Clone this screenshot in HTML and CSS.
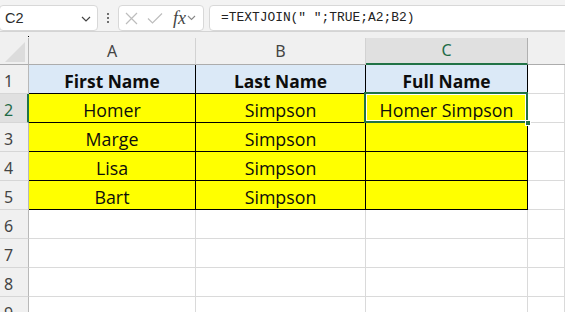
FILE: index.html
```html
<!DOCTYPE html>
<html>
<head>
<meta charset="utf-8">
<link rel="stylesheet" href="styles.css">
</head>
<body>
<div class="app">
  <div class="toolbar">
    <div class="namebox">
      <span class="nb-text">C2</span>
      <svg class="chev" width="10" height="6" viewBox="0 0 10 6"><path d="M1 1l4 4 4-4" fill="none" stroke="#444" stroke-width="1.2"/></svg>
    </div>
    <div class="dots"><span></span><span></span><span></span></div>
    <div class="fnbox">
      <svg class="ic" width="13" height="13" viewBox="0 0 13 13"><path d="M1 1l11 11M12 1L1 12" stroke="#bdbdbd" stroke-width="1.2" fill="none"/></svg>
      <svg class="ic" width="16" height="13" viewBox="0 0 16 13"><path d="M1 6.5l4.5 4.5L15 1.5" stroke="#bdbdbd" stroke-width="1.2" fill="none"/></svg>
      <span class="fx">fx</span>
      <svg class="chev2" width="9" height="6" viewBox="0 0 9 6"><path d="M1 1l3.5 3.5L8 1" fill="none" stroke="#888" stroke-width="1.1"/></svg>
    </div>
    <div class="formula">=TEXTJOIN(" ";TRUE;A2;B2)</div>
  </div>
  <div class="gap"><span class="dot"></span></div>
  <div class="grid">
    <div class="corner"><span class="tri"></span></div>
    <div class="ch">A</div>
    <div class="ch">B</div>
    <div class="ch sel">C</div>
    <div class="ch last"></div>

    <div class="rh">1</div>
    <div class="c hd tb">First Name</div>
    <div class="c hd tb">Last Name</div>
    <div class="c hd tb">Full Name</div>
    <div class="c e"></div>

    <div class="rh rsel">2</div>
    <div class="c y tb">Homer</div>
    <div class="c y tb">Simpson</div>
    <div class="c y tb active">Homer Simpson<span class="handle"></span></div>
    <div class="c e"></div>

    <div class="rh">3</div>
    <div class="c y tb">Marge</div>
    <div class="c y tb">Simpson</div>
    <div class="c y tb"></div>
    <div class="c e"></div>

    <div class="rh">4</div>
    <div class="c y tb">Lisa</div>
    <div class="c y tb">Simpson</div>
    <div class="c y tb"></div>
    <div class="c e"></div>

    <div class="rh">5</div>
    <div class="c y tb">Bart</div>
    <div class="c y tb">Simpson</div>
    <div class="c y tb"></div>
    <div class="c e"></div>

    <div class="rh">6</div>
    <div class="c e"></div><div class="c e"></div><div class="c e"></div><div class="c e"></div>
    <div class="rh">7</div>
    <div class="c e"></div><div class="c e"></div><div class="c e"></div><div class="c e"></div>
    <div class="rh">8</div>
    <div class="c e"></div><div class="c e"></div><div class="c e"></div><div class="c e"></div>
    <div class="rh">9</div>
    <div class="c e"></div><div class="c e"></div><div class="c e"></div><div class="c e"></div>
  </div>
</div>
</body>
</html>
```
FILE: styles.css
```css
* { box-sizing: border-box; }
html, body { margin: 0; padding: 0; }
body { width: 565px; height: 312px; overflow: hidden; background: #f0f0f0; font-family: "Open Sans", "Noto Sans", sans-serif; }
.app { width: 565px; }

.toolbar {
  height: 32px;
  display: flex;
  align-items: flex-start;
  padding-top: 5px;
  background: #f3f3f3;
  border-bottom: 1px solid #d4d4d4;
}
.namebox {
  width: 99px; height: 26px;
  margin-left: -1px;
  background: #fff;
  border: 1px solid #d8d8d8;
  border-radius: 4px;
  display: flex; align-items: center; justify-content: space-between;
  padding: 0 6px 0 5px;
}
.nb-text { font-family: "Liberation Sans", sans-serif; font-size: 14.5px; color: #2b2b2b; }
.chev { margin-top: 1px; }
.dots { width: 20px; height: 26px; display: flex; flex-direction: column; align-items: center; justify-content: center; gap: 2px; }
.dots span { width: 2px; height: 2px; background: #444; border-radius: 1px; }
.fnbox {
  width: 86px; height: 26px;
  background: #fff;
  border: 1px solid #d8d8d8;
  border-radius: 4px;
  display: flex; align-items: center;
  padding-left: 6px; gap: 9px;
}
.fx { font-family: "Liberation Serif", serif; font-style: italic; font-size: 18px; color: #444; margin-left: 1px; }
.chev2 { margin-left: -8px; }
.formula {
  flex: 1;
  height: 26px;
  margin-left: 5px;
  margin-right: -6px;
  background: #fff;
  border: 1px solid #d8d8d8;
  border-radius: 4px;
  font-family: "Liberation Mono", monospace;
  font-size: 12.9px;
  line-height: 24px;
  color: #222;
  padding-left: 11px;
  white-space: pre;
}

.gap { height: 6px; position: relative; background: #f0f0f0; }
.dot { position: absolute; left: 28px; top: 4px; width: 1px; height: 1px; background: #000; }

.grid {
  display: grid;
  grid-template-columns: 29px 167px 170px 162px 1fr;
  grid-template-rows: 27px 29px repeat(8, 29px);
  background: #fff;
}
.corner { background: #f0f0f0; border-right: 1px solid #b8b8b8; border-bottom: 1px solid #acacac; position: relative; }
.tri { position: absolute; left: 5px; top: 4px; width: 0; height: 0; border-left: 20px solid transparent; border-bottom: 20px solid #dcdcdc; }
.ch {
  background: #f0f0f0;
  border-right: 1px solid #d2d2d2;
  border-bottom: 1px solid #acacac;
  text-align: center;
  font-family: "Noto Sans", sans-serif;
  font-size: 16px; line-height: 26px;
  color: #444;
}
.ch.sel { background: #e0e0e0; color: #1e6b47; border-bottom: 2px solid #217346; border-right: 1px solid #b0b0b0; line-height: 25px; }
.ch.last { border-right: none; }
.rh {
  background: #f0f0f0;
  border-right: 1px solid #b8b8b8;
  border-bottom: 1px solid #d6d6d6;
  font-family: "Noto Sans", sans-serif;
  font-size: 16px; line-height: 28px;
  padding-top: 2px;
  color: #444;
  padding-left: 4px;
}
.rh.rsel { background: #e0e0e0; color: #1e6b47; border-right: 2px solid #217346; }
.c {
  border-right: 1px solid #dadada;
  border-bottom: 1px solid #dadada;
  text-align: center;
  font-family: "Open Sans", sans-serif;
  font-size: 17.8px; line-height: 28px;
  padding-top: 2px;
  color: #0d0d0d;
  white-space: nowrap;
}
.c.tb { border-right-color: #000; border-bottom-color: #000; }
.c.hd { background: #dbe9f7; font-weight: 700; font-size: 17.4px; }
.c.y { background: #ffff00; }
.active { position: relative; }
.active::before {
  content: ""; position: absolute; left: -2px; top: -2px; right: -1px; bottom: -1px;
  border: 2px solid #217346;
  box-shadow: inset 0 0 0 1px #fff;
  pointer-events: none;
}
.handle { position: absolute; right: -4px; bottom: -4px; width: 6px; height: 6px; background: #217346; border: 1px solid #fff; z-index: 2; }
```
